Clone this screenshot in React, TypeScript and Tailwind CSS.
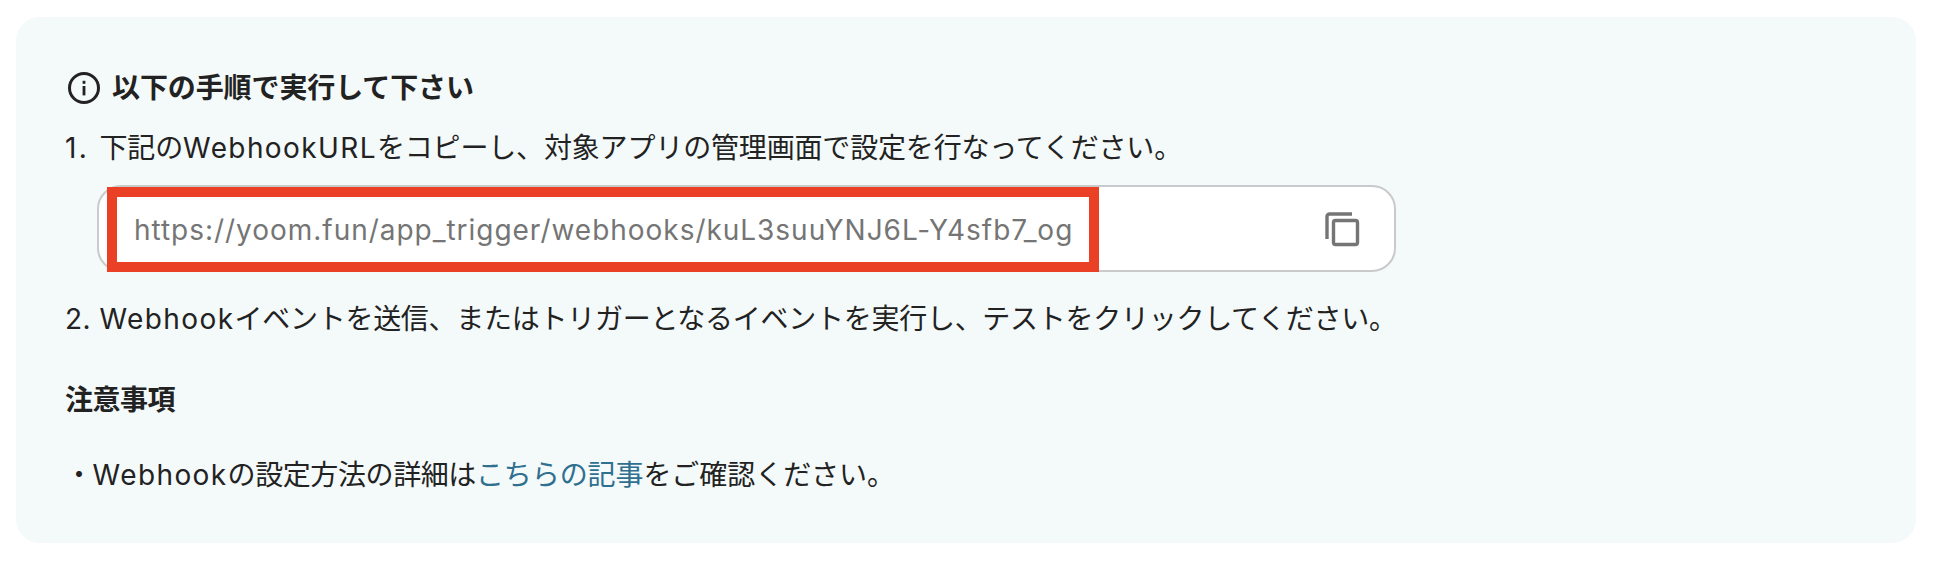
function Latin({ children, className }: { children: string; className?: string }) {
  return <span className={className ?? 'tracking-[1.4px]'}>{children}</span>;
}

export default function App() {
  return (
    <div className="w-[1938px] h-[566px] bg-white pt-[17px] pl-[16px] font-['Inter','Noto_Sans_CJK_JP',sans-serif] text-[#222222]">
      <div className="w-[1900px] h-[526px] rounded-[24px] bg-[#f4f9f9] pl-[49px] pt-[51px]">
        <div className="flex items-center h-[40px] pl-[2px]">
          <svg width="34" height="34" viewBox="0 0 34 34" fill="none" stroke="#222222" className="mr-[11px]">
            <circle cx="17" cy="17" r="14.5" strokeWidth="3" />
            <rect x="15.6" y="15" width="2.8" height="9.4" fill="#222222" stroke="none" />
            <rect x="15.6" y="9.8" width="2.8" height="3" fill="#222222" stroke="none" />
          </svg>
          <span className="text-[28px] font-bold leading-[40px] tracking-[-0.1px]">以下の手順で実行して下さい</span>
        </div>
        <p className="text-[28px] leading-[40px] mt-[20px] tracking-[-0.16px]"><Latin className="tracking-[2.4px]">1. </Latin>下記の<Latin>WebhookURL</Latin>をコピーし、対象アプリの管理画面で設定を行なってください。</p>
        <div className="relative mt-[17px] ml-[32px] w-[1299px] h-[87px] rounded-[24px] border-2 border-[#c8cacb] bg-white flex items-center justify-between pl-[35px] pr-[34px]">
          <span className="text-[28px] text-[#757575] pt-[2px] tracking-[0.97px]">https://yoom.fun/app_trigger/webhooks/kuL3suuYNJ6L-Y4sfb7_og</span>
          <svg width="36" height="36" viewBox="0 0 36 36" fill="none" stroke="#757575" strokeWidth="3.4">
            <path d="M28 3H5.5A2.5 2.5 0 0 0 3 5.5V28" />
            <rect x="9.5" y="9.5" width="24" height="24" rx="2" />
          </svg>
          <div className="absolute left-[8px] top-[0px] w-[992px] h-[85px] border-[10px] border-[#ea4025]" />
        </div>
        <p className="text-[28px] leading-[40px] mt-[27px] tracking-[-0.27px]"><Latin className="tracking-[0.5px]">2. </Latin><Latin>Webhook</Latin>イベントを送信、またはトリガーとなるイベントを実行し、テストをクリックしてください。</p>
        <p className="text-[28px] font-bold leading-[40px] mt-[41px] tracking-[-0.5px]">注意事項</p>
        <p className="text-[28px] leading-[40px] mt-[35px]"><span className="tracking-[-0.4px]">・<Latin>Webhook</Latin>の設定方法の詳細は</span><a className="text-[#2f6f8f] tracking-[-0.1px]">こちらの記事</a><span className="tracking-[-0.05px]">をご確認ください。</span></p>
      </div>
    </div>
  );
}
